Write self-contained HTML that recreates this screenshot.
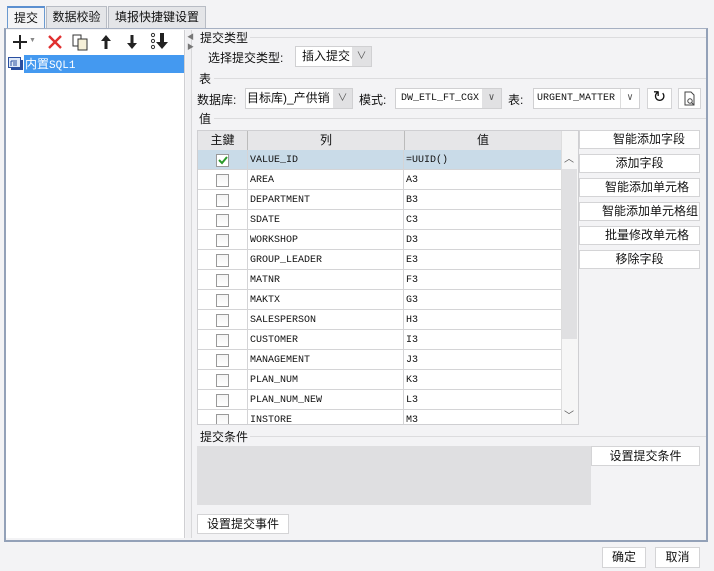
<!DOCTYPE html>
<html><head><meta charset="utf-8"><style>
*{box-sizing:border-box;margin:0;padding:0}
body{width:714px;height:571px;background:#f3f3f5;font-family:"Liberation Sans","Noto Sans CJK SC",sans-serif;font-size:12px;color:#111;position:relative;overflow:hidden}
.a{position:absolute}
.tab{position:absolute;top:6px;height:23px;border:1px solid #b8bcc4;border-bottom:none;background:#e4e5e8;text-align:center;line-height:21px;font-size:12px}
.btn{position:absolute;background:#fff;border:1px solid #d4d4d6;text-align:center;font-size:12px;line-height:17px}
.combo{position:absolute;background:#fff;border:1px solid #d0d0d2;height:21px;line-height:19px;overflow:hidden;white-space:nowrap}
.combo .ar{position:absolute;right:0;top:0;width:19px;height:19px;background:#e1e1e3;text-align:center;color:#555;font-size:10px}
.mono{font-family:"Liberation Mono",monospace;font-size:10px}
.sec{position:absolute;left:192px;right:8px;height:1px;background:#dcdcde}
.row{position:absolute;left:198px;width:363px;height:20px;border-bottom:1px solid #d4d4d6;background:#fff}
.row .cb{position:absolute;left:18px;top:4px;width:13px;height:13px;border:1px solid #999;background:linear-gradient(#f3f3f3,#fff)}
.row .c1{position:absolute;left:49px;top:0;width:157px;height:19px;border-left:1px solid #d4d4d6;border-right:1px solid #d4d4d6;padding-left:2px;line-height:21px}
.row .c2{position:absolute;left:206px;top:0;padding-left:2px;line-height:21px}
</style></head><body>
<div class="tab" style="left:7px;width:38px;background:#f4f4f6;border-color:#6b9ad0;border-top:2px solid #5b8fd0;height:23px">提交</div>
<div class="tab" style="left:46px;width:61px">数据校验</div>
<div class="tab" style="left:108px;width:98px">填报快捷键设置</div>
<div class="a" style="left:4px;top:28px;width:704px;height:514px;border:2px solid #93a1b8;border-top:1px solid #a6b0c2;background:#f3f3f5"></div>
<div class="a" style="left:6px;top:30px;width:179px;height:508px;background:#fff;border-right:1px solid #cfcfd2"></div>
<div class="a" style="left:186px;top:30px;width:6px;height:508px;background:#f0f0f2;border-right:1px solid #d8d8da"></div>
<div class="a" style="left:187px;top:33px;font-size:7px;color:#777;line-height:10px">◀<br>▶</div>
<!-- toolbar -->
<svg class="a" style="left:13px;top:35px" width="16" height="14"><path d="M7 0v14M0 7h14" stroke="#222" stroke-width="2"/></svg>
<div class="a" style="left:29px;top:37px;font-size:7px;color:#888">▼</div>
<svg class="a" style="left:48px;top:35px" width="14" height="14"><path d="M1 1l12 12M13 1L1 13" stroke="#e03030" stroke-width="2.4"/></svg>
<svg class="a" style="left:72px;top:34px" width="18" height="17"><rect x="1" y="1" width="8" height="11" fill="#fff" stroke="#333"/><rect x="6" y="5" width="9" height="11" fill="#f6f0d8" stroke="#333"/></svg>
<svg class="a" style="left:100px;top:34px" width="12" height="16"><path d="M6 1L1 7h3.5v8h3V7H11z" fill="#222"/></svg>
<svg class="a" style="left:126px;top:34px" width="12" height="16"><path d="M6 15L1 9h3.5V1h3v8H11z" fill="#222"/></svg>
<svg class="a" style="left:150px;top:32px" width="20" height="19"><circle cx="3" cy="3" r="1.6" fill="none" stroke="#333"/><circle cx="3" cy="9" r="1.6" fill="none" stroke="#333"/><circle cx="3" cy="15" r="1.6" fill="none" stroke="#333"/><path d="M12 17L6 10h4V1h4v9h4z" fill="#222"/></svg>
<!-- list -->
<svg class="a" style="left:8px;top:57px" width="16" height="14"><rect x="3" y="3" width="12" height="10" fill="#2a4fa0"/><rect x="0.5" y="0.5" width="12" height="10" fill="#dfe9f8" stroke="#2a4fa0"/><path d="M3 4h6M3 4v5M5 6h4M5 8h4" stroke="#2a4fa0"/></svg>
<div class="a" style="left:24px;top:55px;width:160px;height:18px;background:#4499f0;color:#fff;line-height:18px;padding-left:1px">内置<span class="mono" style="font-size:11px">SQL1</span></div>
<!-- right -->
<div class="a" style="left:200px;top:29px">提交类型</div>
<div class="sec" style="left:250px;top:37px"></div>
<div class="a" style="left:208px;top:49px">选择提交类型:</div>
<div class="combo" style="left:295px;top:46px;width:77px;padding-left:6px">插入提交<div class="ar">∨</div></div>
<div class="a" style="left:199px;top:70px">表</div>
<div class="sec" style="left:214px;top:78px"></div>
<div class="a" style="left:197px;top:91px">数据库:</div>
<div class="combo" style="left:245px;top:88px;width:108px;padding-left:1px">目标库)_产供销<div class="ar">∨</div></div>
<div class="a" style="left:359px;top:91px">模式:</div>
<div class="combo mono" style="left:395px;top:88px;width:107px;padding-left:5px;line-height:20px">DW_ETL_FT_CGX<div class="ar" style="font-size:10px">∨</div></div>
<div class="a" style="left:508px;top:91px">表:</div>
<div class="combo mono" style="left:533px;top:88px;width:107px;padding-left:3px;line-height:20px">URGENT_MATTER<div class="ar" style="background:#fff;border-left:1px solid #ddd">∨</div></div>
<div class="btn" style="left:647px;top:88px;width:25px;height:21px;font-size:16px;line-height:18px">↻</div>
<div class="btn" style="left:678px;top:88px;width:23px;height:21px"><svg width="14" height="16" style="margin-top:2px"><path d="M2 1h6l3 3v10H2z" fill="none" stroke="#444"/><circle cx="7" cy="10" r="2.2" fill="none" stroke="#444"/><path d="M8.5 11.5l2 2" stroke="#444"/></svg></div>
<div class="a" style="left:199px;top:110px">值</div>
<div class="sec" style="left:214px;top:118px"></div>
<!-- table -->
<div class="a" style="left:197px;top:130px;width:382px;height:295px;border:1px solid #cfcfd2;background:#fff"></div>
<div class="a" style="left:198px;top:131px;width:363px;height:19px;background:#e6e6e8;line-height:19px">
<span class="a" style="left:0;width:49px;text-align:center">主鍵</span>
<span class="a" style="left:49px;width:157px;text-align:center;border-left:1px solid #bbb">列</span>
<span class="a" style="left:206px;width:157px;text-align:center;border-left:1px solid #bbb">值</span></div>
<div class="a" style="left:561px;top:131px;width:17px;height:293px;background:#f6f6f6;border-left:1px solid #ddd"></div>
<div class="a" style="left:562px;top:169px;width:15px;height:170px;background:#e0e0e2"></div>
<div class="a" style="left:564px;top:150px;font-size:10px;color:#555">︿</div>
<div class="a" style="left:564px;top:407px;font-size:10px;color:#555">﹀</div>
<div class="row" style="top:150px;background:#c9dbe8"><div class="cb" style="background:#fff"><svg width="11" height="11" style="position:absolute;left:0;top:0"><path d="M2 5l3 3 5-6" stroke="#2a9a2a" stroke-width="2" fill="none"/></svg></div><div class="c1 mono">VALUE_ID</div><div class="c2 mono">=UUID()</div></div>
<div class="row" style="top:170px"><div class="cb"></div><div class="c1 mono">AREA</div><div class="c2 mono">A3</div></div>
<div class="row" style="top:190px"><div class="cb"></div><div class="c1 mono">DEPARTMENT</div><div class="c2 mono">B3</div></div>
<div class="row" style="top:210px"><div class="cb"></div><div class="c1 mono">SDATE</div><div class="c2 mono">C3</div></div>
<div class="row" style="top:230px"><div class="cb"></div><div class="c1 mono">WORKSHOP</div><div class="c2 mono">D3</div></div>
<div class="row" style="top:250px"><div class="cb"></div><div class="c1 mono">GROUP_LEADER</div><div class="c2 mono">E3</div></div>
<div class="row" style="top:270px"><div class="cb"></div><div class="c1 mono">MATNR</div><div class="c2 mono">F3</div></div>
<div class="row" style="top:290px"><div class="cb"></div><div class="c1 mono">MAKTX</div><div class="c2 mono">G3</div></div>
<div class="row" style="top:310px"><div class="cb"></div><div class="c1 mono">SALESPERSON</div><div class="c2 mono">H3</div></div>
<div class="row" style="top:330px"><div class="cb"></div><div class="c1 mono">CUSTOMER</div><div class="c2 mono">I3</div></div>
<div class="row" style="top:350px"><div class="cb"></div><div class="c1 mono">MANAGEMENT</div><div class="c2 mono">J3</div></div>
<div class="row" style="top:370px"><div class="cb"></div><div class="c1 mono">PLAN_NUM</div><div class="c2 mono">K3</div></div>
<div class="row" style="top:390px"><div class="cb"></div><div class="c1 mono">PLAN_NUM_NEW</div><div class="c2 mono">L3</div></div>
<div class="row" style="top:410px;height:14px;overflow:hidden;border:none"><div class="cb"></div><div class="c1 mono">INSTORE</div><div class="c2 mono">M3</div></div>
<!-- side buttons -->
<div class="btn" style="left:579px;top:130px;width:121px;height:19px;text-align:right;padding-right:14px">智能添加字段</div>
<div class="btn" style="left:579px;top:154px;width:121px;height:19px">添加字段</div>
<div class="btn" style="left:579px;top:178px;width:121px;height:19px;text-align:right;padding-right:10px">智能添加单元格</div>
<div class="btn" style="left:579px;top:202px;width:121px;height:19px;text-align:right;padding-right:1px">智能添加单元格组</div>
<div class="btn" style="left:579px;top:226px;width:121px;height:19px;text-align:right;padding-right:10px">批量修改单元格</div>
<div class="btn" style="left:579px;top:250px;width:121px;height:19px">移除字段</div>
<!-- conditions -->
<div class="a" style="left:200px;top:428px">提交条件</div>
<div class="sec" style="left:250px;top:436px"></div>
<div class="a" style="left:197px;top:446px;width:394px;height:59px;background:#dfdfe1"></div>
<div class="btn" style="left:591px;top:446px;width:109px;height:20px;line-height:18px">设置提交条件</div>
<div class="btn" style="left:197px;top:514px;width:92px;height:20px;line-height:18px">设置提交事件</div>
<div class="btn" style="left:602px;top:547px;width:44px;height:21px;line-height:19px">确定</div>
<div class="btn" style="left:655px;top:547px;width:45px;height:21px;line-height:19px">取消</div>
</body></html>
